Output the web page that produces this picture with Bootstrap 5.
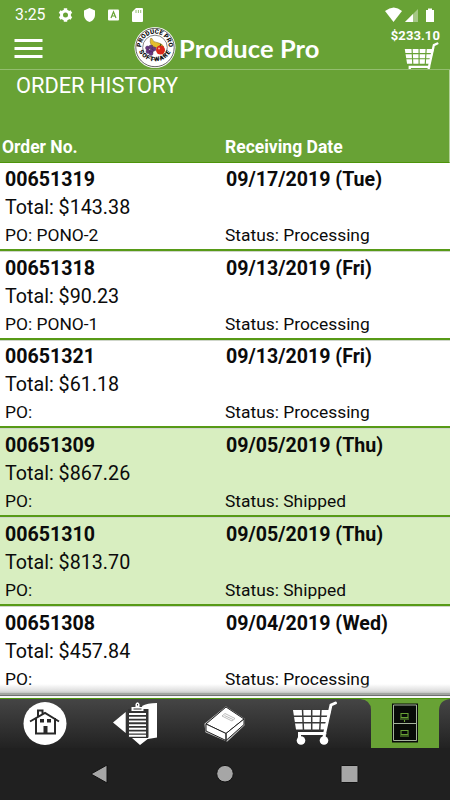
<!DOCTYPE html>
<html lang="en">
<head>
<meta charset="utf-8">
<meta name="viewport" content="width=device-width, initial-scale=1">
<title>Produce Pro</title>
<link href="https://cdn.jsdelivr.net/npm/bootstrap@5.3.0/dist/css/bootstrap.min.css" rel="stylesheet">
<style>
body{width:450px;height:800px;overflow:hidden;font-family:Roboto,"Liberation Sans",sans-serif;color:#0b0b0b;background:#fff;line-height:1}
svg{display:block;flex:none}
.green{background:#68a235;color:#fff}
.status{height:26px;padding:3px 15px 0 15px;font-size:15.8px}
.clock{width:43px}
.appbar{height:44px;border-bottom:1px solid #93bd6f;padding-left:14px;padding-right:10px}
.logo{margin-left:90px}
.brand{font-family:Lato,sans-serif;font-weight:700;font-size:25.5px;letter-spacing:.1px;padding-left:3px;padding-top:2px}
.amount{font-size:13px;font-weight:700;letter-spacing:.1px;padding-top:3px;height:17px}
.cart-green{color:#68a235}
.cart-dark{color:#393939}
.heading{height:60px;padding:5px 16px;font-size:21.8px;border-right:1px solid #b4d19b}
.colhead{height:33px;font-size:17.5px;font-weight:700;border-bottom:1px solid #4c9409;border-right:1px solid #b4d19b;line-height:35px}
.half{width:225px}
.first{width:220px}
.orders{height:530px;overflow:hidden}
.order{height:88.75px;border-bottom:1px solid #cfd6ca;box-shadow:inset 0 -2px #579a17;padding:5.800px 0 0 5px}
.order.shipped{background:#d8eec0}
.l1{font-size:19.6px;font-weight:700;height:29px;line-height:21px}
.half .l1{padding-left:1px}
.l2{font-size:19.7px;height:26px;line-height:20px}
.l3{font-size:17.4px;line-height:22px}
.edge{height:15px;margin-top:-9px;z-index:1;background:linear-gradient(#fff0 0,#ddd 7px,#c2c4c2 9px,#a3a7a2 9px,#a3a7a2 11px,#707070 11px,#707070 12px,#f8f8f8 12px,#f8f8f8 14px,#4d960c 14px)}
.tabs{height:49px;background:linear-gradient(#454545,#222)}
.tab{width:90px;height:49px}
.sysnav{height:52px;background:#202020}
</style>
<script src="https://cdn.jsdelivr.net/npm/bootstrap@5.3.0/dist/js/bootstrap.bundle.min.js"></script>
</head>
<body class="d-flex flex-column">
<header class="green">
  <div class="status d-flex align-items-center">
    <div class="d-flex align-items-center">
      <span class="clock">3:25</span>
      <svg width="96" height="16" viewBox="0 0 96 16" fill="#fff"><g transform="translate(7.500 8)"><circle r="4" fill="none" stroke="#fff" stroke-width="3"/><path stroke="#fff" stroke-width="3.400" d="M0-6.800V-4M0 4V6.800M-5.900-3.400L-3.500-2M3.500 2L5.900 3.400M-5.900 3.400L-3.500 2M3.500-2L5.900-3.400"/></g><path d="M31.500 1L37 3.400V8c0 3-2.200 6-5.500 7C28.200 14 26 11 26 8V3.400z"/><rect x="50" y="2.500" width="11" height="11" rx="1"/><path d="M53 11L55.500 4.800L58 11M54 9H57" fill="none" stroke="#68a235" stroke-width="1.200"/><path d="M78 1h6q1 0 1 1v12q0 1-1 1h-9q-1 0-1-1V5z"/><path d="M78 3v3M80.400 3v3M82.700 3v3" stroke="#68a235" stroke-width=".7"/></svg>
    </div>
    <svg class="ms-auto" width="54" height="16" viewBox="0 0 54 16" fill="#fff"><path d="M4 4Q13-3 21 4L12.500 15z"/><path d="M24 15L37 2V15z" opacity=".4"/><path d="M24 15L32 7V15z"/><path d="M45 3h2V1.500h4V3h2v12h-8z"/></svg>
  </div>
  <div class="appbar d-flex">
    <svg width="30" height="43" viewBox="0 0 30 43"><path d="M.500 14.500H28.500M.500 22.500H28.500M.500 30.500H28.500" stroke="#fff" stroke-width="3"/></svg>
    <svg class="logo" width="42" height="43" viewBox="0 0 42 43"><circle cx="21" cy="21.500" r="20.500" fill="#fff"/><circle cx="21" cy="21.500" r="19.200" fill="none" stroke="#222" stroke-width=".7"/><circle cx="21" cy="21.500" r="12.300" fill="none" stroke="#555" stroke-width=".7"/><defs><path id="arcTop" d="M8 26A13.800 13.800 0 1 1 34 26"/><path id="arcBottom" d="M3.200 20A18 18 0 0 0 38.800 20"/></defs><g font-family="Roboto,sans-serif" font-weight="900" font-size="6.300" fill="#111" text-anchor="middle"><text><textPath href="#arcTop" startOffset="50%">PRODUCE PRO</textPath></text><text letter-spacing=".8"><textPath href="#arcBottom" startOffset="50%">SOFTWARE</textPath></text></g><path d="M16.500 12.500l1.500 0q1 4 5 4q5 .5 7 4.500q-5 1.500-9 .5q-6-2-4.500-9z" fill="#e4bd2d" stroke="#806315" stroke-width=".5"/><g fill="#683783" stroke="#311b42" stroke-width=".4"><circle cx="13.500" cy="22" r="2"/><circle cx="17" cy="21" r="2"/><circle cx="20" cy="23" r="2"/><circle cx="14" cy="25.500" r="2"/><circle cx="17.500" cy="25" r="2"/><circle cx="17" cy="27.500" r="2"/></g><circle cx="26.500" cy="24" r="4.500" fill="#d82719"/><path d="M26 20l1-2" stroke="#274515"/><circle cx="25" cy="22.500" r="1" fill="#ffac9b"/></svg>
    <div class="brand align-self-center">Produce Pro</div>
    <div class="ms-auto d-flex flex-column align-items-end">
      <div class="amount">$233.10</div>
      <svg class="cart-green" width="36" height="27" viewBox="-1 0 47 35.200"><use href="#cart"/></svg>
    </div>
  </div>
  <div class="heading">ORDER HISTORY</div>
  <div class="colhead d-flex"><div class="half" style="padding-left:2px">Order No.</div><div>Receiving Date</div></div>
</header>
<main class="orders flex-shrink-0" id="orders"></main>
<div class="edge flex-shrink-0"></div>
<nav class="tabs d-flex flex-shrink-0">
  <div class="tab"><svg width="90" height="49" viewBox="0 0 90 49"><circle cx="45" cy="24.500" r="21.500" fill="#fff"/><g fill="none" stroke="#292929" stroke-width="2"><path d="M30 22.500L45 14L59 22.500M36 19V34.500H55V19M38 18V11.500H42.500V15"/></g><path d="M40 20h4v3.500h-4zM47 20h4v3.500h-4zM43.500 27h4v8h-4z" fill="#292929"/></svg></div>
  <div class="tab"><svg width="90" height="49" viewBox="0 0 90 49"><path d="M23 23.500L35.700 13V34zM52 7Q57 4 67 4V38.500L58 40V11H53zM42 39H59L50 46z" fill="#fff"/><path d="M38 10H58.500V38.500H38z" fill="#343434"/><path d="M39 15H56M39 18.700H56M39 22.400H56M39 26.100H56M39 29.800H56M39 33.500H56M39 36.800H56" stroke="#fff" stroke-width="1.900"/><path d="M41.500 12V8h4V5q2-3.500 4 0v3h4v4z" fill="#fff"/><path d="M43.500 10h8M47.500 5v1.500" stroke="#333"/></svg></div>
  <div class="tab"><svg width="90" height="49" viewBox="0 0 90 49"><g fill="#fff" stroke="#222" stroke-linejoin="round"><path d="M25 25L46 8L64 20V26L47 42L26 33z" stroke="#bbb" stroke-width="1.200"/><path d="M26 25L46 8L64 20L46 34.500z"/><path d="M26 25L46 34.500V41.500L26 32zM46 34.500L64 20V25.500L46 41.500z"/></g><path d="M42 17l3-2.500l10 5l-3 2.500zM44.500 16.500l8.500 4" fill="none" stroke="#aaa" stroke-width=".8"/></svg></div>
  <div class="tab cart-dark"><svg width="90" height="49" viewBox="0 0 90 49"><g transform="translate(23 2)"><g id="cart" fill="none" stroke="#fff"><path d="M0 9H38L33 28.500H3z" fill="#fff" stroke="none"/><path d="M-1 15.200H39M-1 21.800H37M9.500 8L10.500 30M18.700 8V30M28 8L26.700 30" stroke="currentColor" stroke-width="1.500"/><path d="M42.500 2L38 4L31.500 33L31 37M6.500 38V32.500H32" stroke-width="3" stroke-linecap="round"/><circle cx="8" cy="39.500" r="4.300" fill="#fff" stroke="none"/><circle cx="31" cy="39.500" r="4.300" fill="#fff" stroke="none"/></g></g></svg></div>
  <div class="tab"><svg width="90" height="49" viewBox="0 0 90 49"><path d="M0 0H90Q79 1 79 12V49H11V11Q11 1 0 0z" fill="#68a235"/><path d="M32 4.500H58V43.500H32z" fill="#080b08"/><path d="M33.500 6H56.500V41.500H33.500zM33.500 24.500H56.500" fill="none" stroke="#a4b39b"/><path d="M41 14.500h7v4h-7zM40 20h9M44.500 21v2M41 31.500h7v4h-7zM40 37h9" fill="none" stroke="#68a235" stroke-width="1.100"/></svg></div>
</nav>
<div class="sysnav flex-shrink-0"><svg width="450" height="51" viewBox="0 0 450 51" fill="#a6a6a6" stroke="#111"><path d="M91 26L107 17V35z"/><circle cx="225" cy="25.700" r="8.300"/><rect x="341" y="17.500" width="17" height="17" rx="1"/></svg></div>
<script>
const orders=[["00651319","09/17/2019 (Tue)","$143.38","PONO-2","Processing"],["00651318","09/13/2019 (Fri)","$90.23","PONO-1","Processing"],["00651321","09/13/2019 (Fri)","$61.18","","Processing"],["00651309","09/05/2019 (Thu)","$867.26","","Shipped"],["00651310","09/05/2019 (Thu)","$813.70","","Shipped"],["00651308","09/04/2019 (Wed)","$457.84","","Processing"]];
document.getElementById("orders").innerHTML=orders.map(o=>`<div class="order d-flex ${o[4]==="Shipped"?"shipped":""}"><div class="first"><div class="l1">${o[0]}</div><div class="l2">Total: ${o[2]}</div><div class="l3">PO: ${o[3]}</div></div><div class="half"><div class="l1">${o[1]}</div><div class="l2"></div><div class="l3">Status: ${o[4]}</div></div></div>`).join("");
</script>
</body>
</html>
